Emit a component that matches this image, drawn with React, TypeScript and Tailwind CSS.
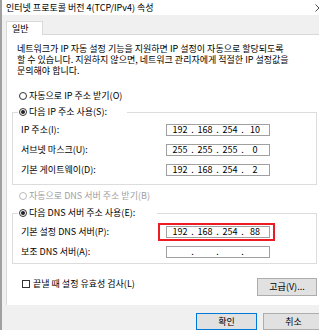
import React from "react";

const Radio = ({ checked, disabled }: { checked?: boolean; disabled?: boolean }) => (
  <span
    className={`flex items-center justify-center w-[8px] h-[8px] rounded-full border bg-white ${
      disabled ? "border-[#bcbcbc]" : "border-[#333333]"
    }`}
  >
    {checked && <span className="w-[4px] h-[4px] rounded-full bg-[#222222]" />}
  </span>
);

const IpInput = ({ parts }: { parts: string[] }) => (
  <div className="flex items-center w-[104px] h-[12px] border border-[#a0a0a0] bg-white pl-[2px] leading-[10px]">
    {parts.map((p, i) => (
      <React.Fragment key={i}>
        {i > 0 && <span className="w-[3px] text-center">.</span>}
        <span className="w-[22px] text-center">{p}</span>
      </React.Fragment>
    ))}
  </div>
);

const Row = ({ label, children }: { label: string; children: React.ReactNode }) => (
  <div className="flex items-center h-[20px]">
    <span className="w-[153px] pl-[8px]">{label}</span>
    {children}
  </div>
);

const App = () => {
  return (
    <div className="relative w-[319px] h-[330px] overflow-hidden bg-[#f0f0f0] border-l-2 border-[#a0a0a0] font-['Noto_Sans_CJK_KR','Noto_Sans',sans-serif] text-[9px] text-black">
      {/* title bar */}
      <div className="flex items-center justify-between h-[15px] bg-white pl-[4px] leading-[15px]">
        <span>인터넷 프로토콜 버전 4(TCP/IPv4) 속성</span>
        <svg width="8" height="8" viewBox="0 0 8 8" className="mr-[-4px]">
          <path d="M0.5 0.5 L7.5 7.5 M7.5 0.5 L0.5 7.5" stroke="#333" strokeWidth="0.9" />
        </svg>
      </div>

      {/* tabs */}
      <div className="flex items-end h-[19px] pl-[4px]">
        <div className="relative z-10 -mb-px w-[37px] h-[14px] bg-white border border-b-0 border-[#d9d9d9] pl-[5px] leading-[13px]">
          일반
        </div>
      </div>

      {/* panel */}
      <div className="ml-[4px] h-[271px] bg-white border-t border-l border-[#d9d9d9]">
        <div className="pt-[8px] pl-[10px] leading-[11px]">
          <p>네트워크가 IP 자동 설정 기능을 지원하면 IP 설정이 자동으로 할당되도록</p>
          <p>할 수 있습니다. 지원하지 않으면, 네트워크 관리자에게 적절한 IP 설정값을</p>
          <p>문의해야 합니다.</p>
        </div>

        <div className="flex items-center gap-[2px] h-[12px] mt-[14px] pl-[12px]">
          <Radio />
          <span>자동으로 IP 주소 받기(O)</span>
        </div>

        <fieldset className="mt-[4px] ml-[5px] w-[305px] border border-[#dcdcdc] pb-[4px]">
          <legend className="ml-[5px] pl-[1px] pr-[20px]">
            <span className="flex items-center gap-[2px] h-[12px]">
              <Radio checked />
              <span>다음 IP 주소 사용(S):</span>
            </span>
          </legend>
          <div className="pt-[2px]">
            <Row label="IP 주소(I):">
              <IpInput parts={["192", "168", "254", "10"]} />
            </Row>
            <Row label="서브넷 마스크(U):">
              <IpInput parts={["255", "255", "255", "0"]} />
            </Row>
            <Row label="기본 게이트웨이(D):">
              <IpInput parts={["192", "168", "254", "2"]} />
            </Row>
          </div>
        </fieldset>

        <div className="flex items-center gap-[2px] h-[12px] mt-[5px] pl-[12px] text-[#a0a0a0]">
          <Radio disabled />
          <span>자동으로 DNS 서버 주소 받기(B)</span>
        </div>

        <fieldset className="mt-[5px] ml-[5px] w-[305px] border border-[#dcdcdc] pb-[1px]">
          <legend className="ml-[5px] pl-[1px] pr-[22px]">
            <span className="flex items-center gap-[2px] h-[12px]">
              <Radio checked />
              <span>다음 DNS 서버 주소 사용(E):</span>
            </span>
          </legend>
          <div className="pt-[3px]">
            <Row label="기본 설정 DNS 서버(P):">
              <div className="relative">
                <IpInput parts={["192", "168", "254", "88"]} />
                <div className="absolute -left-[8px] -right-[5px] -top-[3px] -bottom-[3px] border-2 border-[#ed1c24]" />
              </div>
            </Row>
            <Row label="보조 DNS 서버(A):">
              <IpInput parts={["", "", "", ""]} />
            </Row>
          </div>
        </fieldset>

        <div className="flex items-start justify-between mt-[14px] ml-[5px] w-[305px]">
          <div className="flex items-center gap-[3px] h-[12px] pl-[10px]">
            <span className="w-[8px] h-[8px] border border-[#333333] bg-white" />
            <span>끝낼 때 설정 유효성 검사(L)</span>
          </div>
          <button className="w-[60px] h-[18px] bg-[#e1e1e1] border border-[#adadad] leading-[16px]">
            고급(V)...
          </button>
        </div>
      </div>

      {/* bottom buttons */}
      <div className="flex mt-[8px] pl-[194px] gap-[6px]">
        <button className="w-[61px] h-[17px] shrink-0 bg-[#e1e1e1] border border-[#0078d7] leading-[15px]">
          확인
        </button>
        <button className="w-[61px] h-[17px] shrink-0 bg-[#e1e1e1] border border-[#adadad] leading-[15px]">
          취소
        </button>
      </div>
    </div>
  );
};

export default App;
